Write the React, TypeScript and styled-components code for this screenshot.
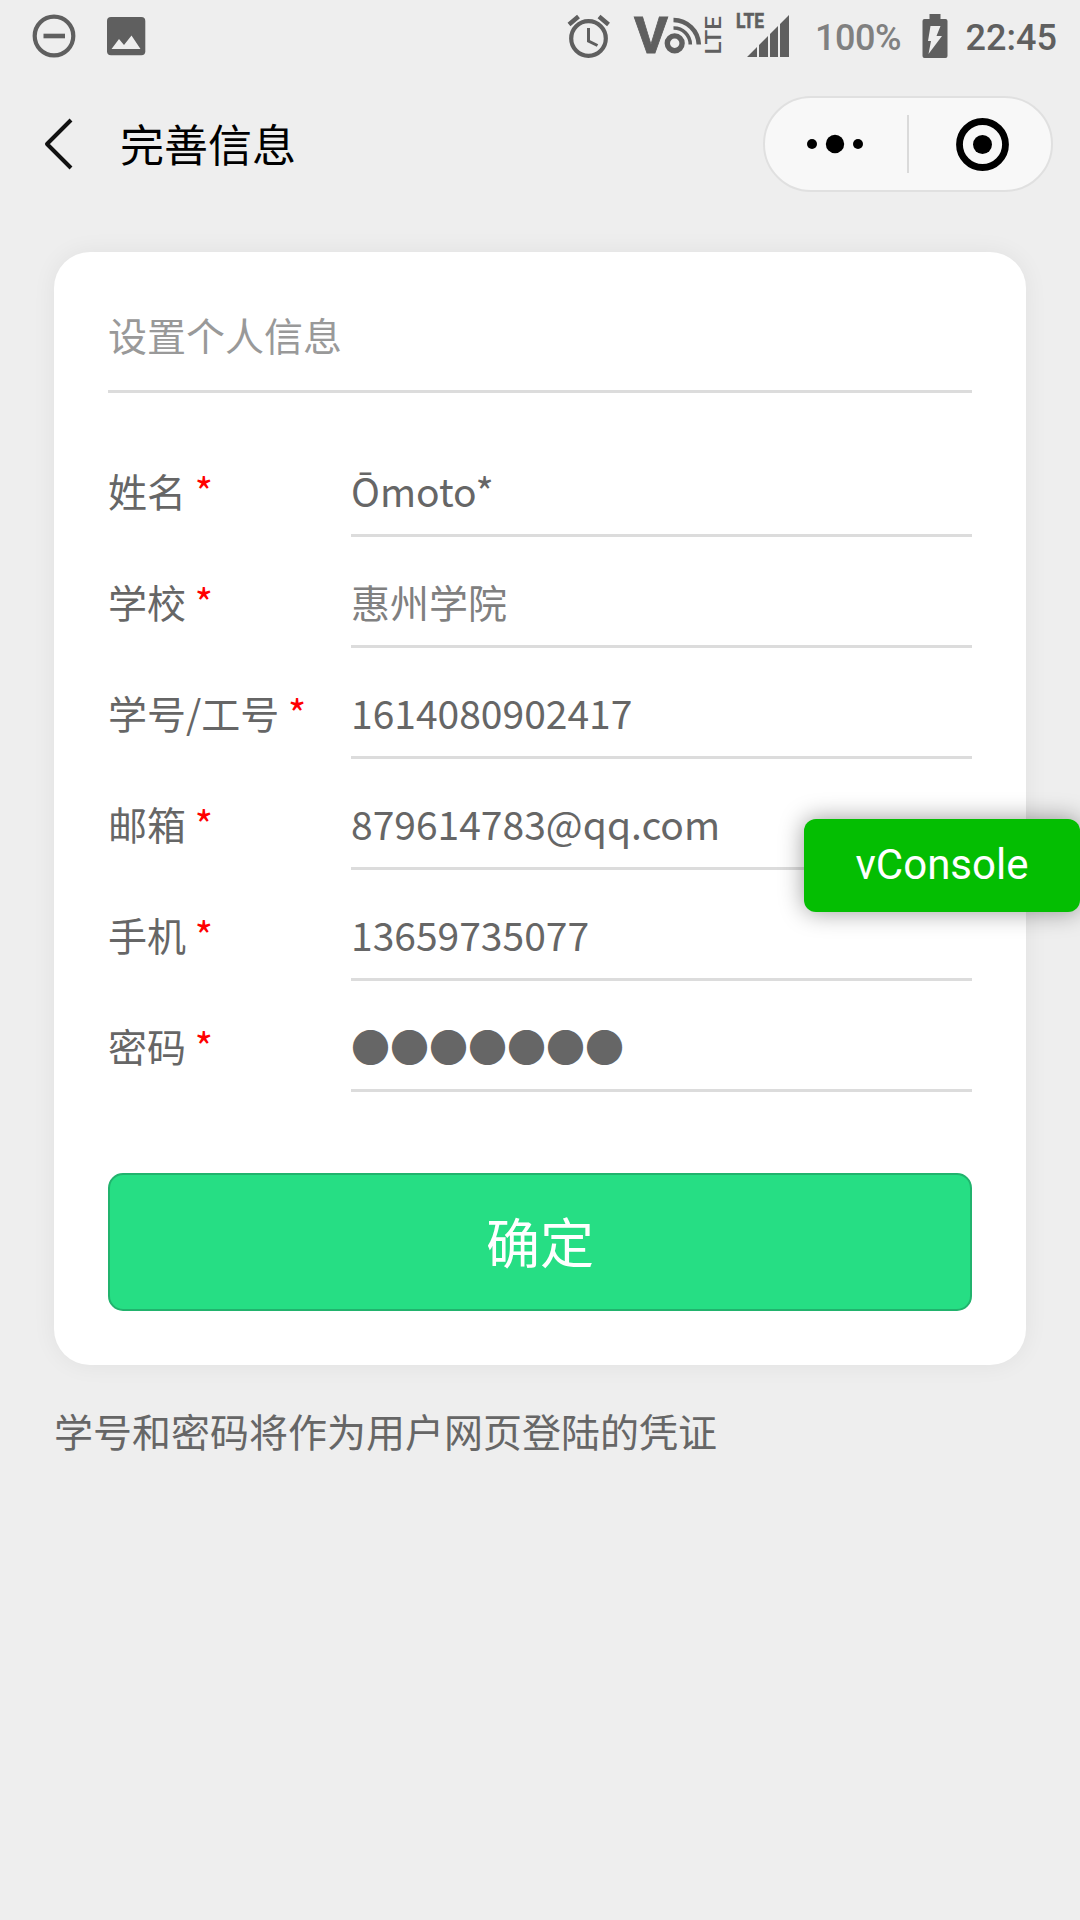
import React from "react";
import styled, { createGlobalStyle } from "styled-components";

const GlobalStyle = createGlobalStyle`
  *, *::before, *::after { box-sizing: border-box; }
  body {
    margin: 0;
    background: #eeeeee;
    font-family: "Noto Sans CJK SC", sans-serif;
  }
`;

const Screen = styled.div`
  width: 1080px;
  min-height: 1920px;
  overflow: hidden;
  background: #eeeeee;
`;

const StatusBar = styled.div`
  display: flex;
  justify-content: space-between;
  height: 72px;
  font-family: Roboto, sans-serif;
`;

const StatusGroup = styled.div`
  display: flex;
  align-items: center;
`;

const StatusText = styled.span<{ $color: string; $width: number; $indent: number; $tracking?: number }>`
  width: ${(p) => p.$width}px;
  padding: 4px 0 0 ${(p) => p.$indent}px;
  font-size: 36px;
  line-height: 42px;
  font-weight: 500;
  letter-spacing: ${(p) => p.$tracking ?? 0}px;
  white-space: nowrap;
  color: ${(p) => p.$color};
`;

const Icon = styled.svg`
  display: block;
  flex: none;
`;

const NavBar = styled.header`
  display: flex;
  align-items: center;
  height: 144px;
  padding: 0 27px 0 40px;
`;

const Title = styled.h1`
  flex: 1;
  margin: 0 0 0 44px;
  padding-bottom: 3px;
  font-size: 44px;
  line-height: 64px;
  font-weight: 400;
  color: #000;
`;

const Capsule = styled.div`
  display: flex;
  align-items: center;
  width: 290px;
  height: 96px;
  border: 2px solid #e0e0e0;
  border-radius: 48px;
  background: #f8f8f8;
`;

const CapsuleButton = styled.button`
  display: flex;
  flex: 1;
  align-items: center;
  justify-content: center;
  height: 100%;
  padding: 0;
  border: 0;
  background: none;
`;

const CapsuleDivider = styled.span`
  width: 2px;
  height: 58px;
  background: #dadada;
`;

const Card = styled.main`
  display: flex;
  flex-direction: column;
  height: 1113px;
  margin: 36px 54px 0;
  padding: 0 54px 54px;
  border-radius: 36px;
  background: #fff;
  box-shadow: 0 0 24px rgba(0, 0, 0, 0.06);
`;

const CardHeading = styled.h2`
  height: 141px;
  margin: 0 0 33px;
  padding-top: 53px;
  border-bottom: 3px solid #dcdcdc;
  font-size: 39px;
  line-height: 58px;
  font-weight: 400;
  color: #999;
`;

const Row = styled.div`
  display: flex;
  height: 111px;
  font-size: 39px;
  line-height: 58px;
  color: #666;
`;

const Label = styled.label`
  width: 243px;
  padding-top: 35px;
  white-space: nowrap;
`;

const Required = styled.span`
  color: #f00;
`;

const Value = styled.div<{ $muted?: boolean }>`
  flex: 1;
  padding-top: 35px;
  border-bottom: 3px solid #dcdcdc;
  white-space: nowrap;
  color: ${(p) => (p.$muted ? "#808080" : "#666")};
`;

const SubmitButton = styled.button`
  height: 138px;
  margin-top: auto;
  padding: 0 0 2px;
  border: 2px solid #21b36d;
  border-radius: 15px;
  background: #26de84;
  font-family: inherit;
  font-size: 54px;
  line-height: 80px;
  color: #fff;
`;

const Note = styled.p`
  margin: 36px 54px 0;
  font-size: 39px;
  line-height: 58px;
  color: #666;
`;

const ConsoleButton = styled.button`
  position: absolute;
  top: 819px;
  left: 804px;
  width: 276px;
  height: 93px;
  padding: 0 0 1px;
  border: 0;
  border-radius: 12px;
  background: #04be02;
  box-shadow: 0 0 24px rgba(0, 0, 0, 0.4);
  font-family: Roboto, sans-serif;
  font-size: 42px;
  line-height: 48px;
  color: #fff;
`;

const fields = [
  { label: "姓名", value: "Ōmoto*" },
  { label: "学校", value: "惠州学院", muted: true },
  { label: "学号/工号", value: "1614080902417" },
  { label: "邮箱", value: "879614783@qq.com" },
  { label: "手机", value: "13659735077" },
  { label: "密码", value: "●●●●●●●" },
];

const GREY = "#5f5f5f";

function NotificationIcons() {
  return (
    <Icon width="150" height="72" viewBox="0 0 150 72">
      <circle cx="54" cy="36" r="19.3" fill="none" stroke={GREY} strokeWidth="4.2" />
      <rect x="43.5" y="33.7" width="21.5" height="4.6" fill={GREY} />
      <rect x="107" y="17" width="38.3" height="38.3" rx="4" fill={GREY} />
      <path d="M111.5 49l7.5-10 5 6 7.5-9.5 9 13.5z" fill="#eee" />
    </Icon>
  );
}

function SignalIcons() {
  return (
    <Icon width="250" height="72" viewBox="560 0 250 72" fontFamily="Roboto, sans-serif">
      <g fill="none" stroke={GREY}>
        <circle cx="588.5" cy="38.5" r="17.3" strokeWidth="4.2" />
        <path d="M588.5 28v13l9 4.5" strokeWidth="3" />
        <path d="M569 24.5l9.5-8M608.5 24.5l-9.5-8" strokeWidth="4.5" />
        <circle cx="674.7" cy="43.3" r="7.4" strokeWidth="5.4" />
        <path d="M673.5 28a16.5 16.5 0 0 1 16.8 16.5" strokeWidth="3.6" />
        <path d="M673.5 20a25.5 25.5 0 0 1 25.3 24.5" strokeWidth="4.6" />
      </g>
      <g fill={GREY}>
        <text x="634" y="53" fontSize="50" fontWeight="700" textLength="34" lengthAdjust="spacingAndGlyphs" stroke={GREY} strokeWidth="0.8">V</text>
        <text transform="translate(721 54.5) rotate(-90)" fontSize="22" fontWeight="500" textLength="38.5" lengthAdjust="spacingAndGlyphs">LTE</text>
        <text x="736" y="28" fontSize="21" fontWeight="700" textLength="28" lengthAdjust="spacingAndGlyphs" stroke={GREY} strokeWidth="0.6">LTE</text>
        <path d="M747 57l10-10v10zM759 57V45l9-9v21zM770 57V34l8-8v31zM780 57V24l9-9v42z" />
      </g>
    </Icon>
  );
}

function BatteryIcon() {
  return (
    <Icon width="26" height="72" viewBox="921.5 0 26 72">
      <path d="M929 14h11v5h5a2 2 0 0 1 2 2v35a2 2 0 0 1-2 2h-21a2 2 0 0 1-2-2v-35a2 2 0 0 1 2-2h5z" fill={GREY} />
      <path d="M930 26h10l-4 10h5.5L928 54l2.5-13h-3z" fill="#eee" />
    </Icon>
  );
}

export default function App() {
  return (
    <Screen>
      <GlobalStyle />
      <StatusBar>
        <StatusGroup>
          <NotificationIcons />
        </StatusGroup>
        <StatusGroup>
          <SignalIcons />
          <StatusText $color="#808080" $width={111.5} $indent={5} $tracking={-0.5}>
            100%
          </StatusText>
          <BatteryIcon />
          <StatusText $color={GREY} $width={132.5} $indent={18}>
            22:45
          </StatusText>
        </StatusGroup>
      </StatusBar>
      <NavBar>
        <Icon width="36" height="60" viewBox="40 114 36 60">
          <path d="M71 120L47 144l24 24" fill="none" stroke="#111" strokeWidth="4" strokeLinejoin="round" />
        </Icon>
        <Title>完善信息</Title>
        <Capsule>
          <CapsuleButton aria-label="菜单">
            <Icon width="60" height="20" viewBox="0 0 60 20">
              <circle cx="6" cy="10" r="5" />
              <circle cx="29" cy="10" r="9.2" />
              <circle cx="52" cy="10" r="5" />
            </Icon>
          </CapsuleButton>
          <CapsuleDivider />
          <CapsuleButton aria-label="关闭">
            <Icon width="62" height="60" viewBox="0 0 62 60">
              <circle cx="33.5" cy="30.5" r="9.5" />
              <circle cx="33.5" cy="30.5" r="23" fill="none" stroke="#000" strokeWidth="6.8" />
            </Icon>
          </CapsuleButton>
        </Capsule>
      </NavBar>
      <Card>
        <CardHeading>设置个人信息</CardHeading>
        {fields.map((f) => (
          <Row key={f.label}>
            <Label>
              {f.label} <Required>*</Required>
            </Label>
            <Value $muted={f.muted}>{f.value}</Value>
          </Row>
        ))}
        <SubmitButton>确定</SubmitButton>
      </Card>
      <Note>学号和密码将作为用户网页登陆的凭证</Note>
      <ConsoleButton>vConsole</ConsoleButton>
    </Screen>
  );
}
